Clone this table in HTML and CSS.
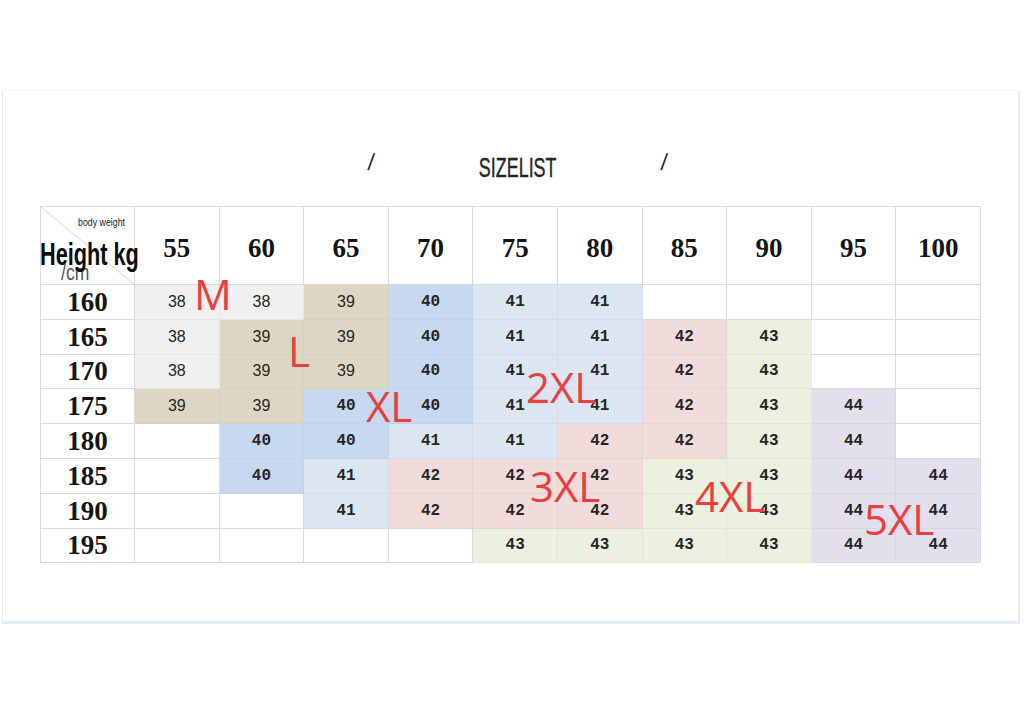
FILE: index.html
```html
<!DOCTYPE html>
<html lang="en">
<head>
<meta charset="utf-8">
<title>Size list</title>
<link rel="stylesheet" href="styles.css">
</head>
<body>
<div class="panel">
  <div class="title-row">
    <span class="slash">/</span>
    <span class="title-box"><span class="title">SIZELIST</span></span>
    <span class="slash">/</span>
  </div>
  <div class="chart">
    <table class="sizes">
      <colgroup><col class="col-head"><col span="10"></colgroup>
      <thead>
        <tr>
          <th class="corner">
            <svg class="diag" width="94" height="78" viewBox="0 0 94 78"><line x1="0" y1="0" x2="94" y2="78" stroke="#d2d2d2" stroke-width="1"/></svg>
            <span class="cm">/cm</span>
            <span class="bw">body weight</span>
            <span class="hk">Height kg</span>
          </th>
          <th>55</th><th>60</th><th>65</th><th>70</th><th>75</th><th>80</th><th>85</th><th>90</th><th>95</th><th>100</th>
        </tr>
      </thead>
      <tbody>
        <tr><th>160</th>
          <td class="m s">38</td><td class="m s">38</td><td class="l s">39</td><td class="xl">40</td><td class="x2">41</td><td class="x2">41</td><td></td><td></td><td></td><td></td></tr>
        <tr><th>165</th>
          <td class="m s">38</td><td class="l s">39</td><td class="l s">39</td><td class="xl">40</td><td class="x2">41</td><td class="x2">41</td><td class="x3">42</td><td class="x4">43</td><td></td><td></td></tr>
        <tr><th>170</th>
          <td class="m s">38</td><td class="l s">39</td><td class="l s">39</td><td class="xl">40</td><td class="x2">41</td><td class="x2">41</td><td class="x3">42</td><td class="x4">43</td><td></td><td></td></tr>
        <tr><th>175</th>
          <td class="l s">39</td><td class="l s">39</td><td class="xl">40</td><td class="xl">40</td><td class="x2">41</td><td class="x2">41</td><td class="x3">42</td><td class="x4">43</td><td class="x5">44</td><td></td></tr>
        <tr><th>180</th>
          <td></td><td class="xl">40</td><td class="xl">40</td><td class="x2">41</td><td class="x2">41</td><td class="x3">42</td><td class="x3">42</td><td class="x4">43</td><td class="x5">44</td><td></td></tr>
        <tr><th>185</th>
          <td></td><td class="xl">40</td><td class="x2">41</td><td class="x3">42</td><td class="x3">42</td><td class="x3">42</td><td class="x4">43</td><td class="x4">43</td><td class="x5">44</td><td class="x5">44</td></tr>
        <tr><th>190</th>
          <td></td><td></td><td class="x2">41</td><td class="x3">42</td><td class="x3">42</td><td class="x3">42</td><td class="x4">43</td><td class="x4">43</td><td class="x5">44</td><td class="x5">44</td></tr>
        <tr><th>195</th>
          <td></td><td></td><td></td><td></td><td class="x4">43</td><td class="x4">43</td><td class="x4">43</td><td class="x4">43</td><td class="x5">44</td><td class="x5">44</td></tr>
      </tbody>
    </table>
    <span class="tag tag-m">M</span>
    <span class="tag tag-l">L</span>
    <span class="tag tag-xl">XL</span>
    <span class="tag tag-2xl">2XL</span>
    <span class="tag tag-3xl">3XL</span>
    <span class="tag tag-4xl">4XL</span>
    <span class="tag tag-5xl">5XL</span>
  </div>
</div>
</body>
</html>
```

FILE: styles.css
```css
html, body {
  margin: 0;
  padding: 0;
  background: #ffffff;
}

body {
  width: 1024px;
  height: 716px;
  overflow: hidden;
  font-family: "Liberation Sans", Arial, sans-serif;
}

.panel {
  box-sizing: border-box;
  margin: 90px 0 0 2px;
  width: 1018px;
  height: 534px;
  border-left: 1px solid #e8e8e8;
  border-right: 2px solid #e9eef5;
  border-bottom: 3px solid #e7edf5;
  border-top: 1px solid #f6f6f6;
  padding-top: 61px;
  display: flex;
  flex-direction: column;
}

.title-row {
  display: flex;
  justify-content: center;
  align-items: flex-start;
  gap: 104px;
  padding-left: 14px;
  height: 32px;
}

.slash {
  font-family: "Liberation Sans", Arial, sans-serif;
  font-size: 22px;
  line-height: 22px;
  color: #1e1e1e;
  font-weight: normal;
  margin-top: 0;
  display: inline-block;
  transform: skewX(-6deg) scaleY(1.05);
}

.title-box {
  width: 78px;
  display: flex;
  justify-content: center;
  overflow: visible;
}

.title {
  display: inline-block;
  font-size: 28px;
  line-height: 32px;
  color: #262626;
  white-space: nowrap;
  transform: scaleX(0.64);
  transform-origin: center;
  -webkit-text-stroke: 0.4px #262626;
}

.chart {
  position: relative;
  margin: 22px 0 0 37px;
  width: 941px;
}

.sizes {
  border-collapse: collapse;
  table-layout: fixed;
  width: 941px;
  border: 1px solid #c9c9c9;
}

.col-head {
  width: 94px;
}

.sizes th,
.sizes td {
  border: 1px solid #dadada;
  padding: 0;
  text-align: center;
  vertical-align: middle;
}

.sizes thead th {
  height: 73px;
  padding-top: 4px;
  font-family: "Liberation Serif", "Times New Roman", serif;
  font-weight: bold;
  font-size: 27px;
  line-height: 30px;
  color: #151515;
  background: #fff;
}

.sizes tbody th {
  height: 33.8px;
  font-family: "Liberation Serif", "Times New Roman", serif;
  font-weight: bold;
  font-size: 27px;
  line-height: 28px;
  color: #151515;
  background: #fff;
}

.sizes td {
  height: 33.8px;
  font-family: "Liberation Mono", "Courier New", monospace;
  font-weight: bold;
  font-size: 16px;
  line-height: 18px;
  color: #262626;
  background: #fff;
}

.sizes td.s {
  font-family: "Liberation Sans", Arial, sans-serif;
  font-weight: normal;
  font-size: 16px;
}

.sizes td.m { background: #f0f0f0; border-color: #e6e6e6; }
.sizes td.l { background: #dcd7c3; border-color: #d6d1bd; }
.sizes td.xl { background: #c6d9f0; border-color: #c0d3ea; }
.sizes td.x2 { background: #dce6f1; border-color: #d4deea; }
.sizes td.x3 { background: #f2dcdb; border-color: #ead4d3; }
.sizes td.x4 { background: #ebf1de; border-color: #e1e8d4; }
.sizes td.x5 { background: #e4dfec; border-color: #dbd6e3; }

.sizes th.corner {
  position: relative;
  overflow: visible;
}

.diag {
  position: absolute;
  left: 0;
  top: 0;
}

.cm {
  position: absolute;
  left: 20px;
  top: 54px;
  font-family: "Liberation Sans", Arial, sans-serif;
  font-weight: normal;
  font-size: 22px;
  line-height: 24px;
  color: #555;
  transform: scaleX(0.8);
  transform-origin: left;
}

.bw {
  position: absolute;
  left: 37px;
  top: 8px;
  font-family: "Liberation Sans", Arial, sans-serif;
  font-weight: normal;
  font-size: 11px;
  line-height: 14px;
  color: #222;
  white-space: nowrap;
  transform: scaleX(0.8);
  transform-origin: left;
}

.hk {
  position: absolute;
  left: -1px;
  top: 32px;
  font-family: "Liberation Sans", Arial, sans-serif;
  font-weight: bold;
  font-size: 31px;
  line-height: 31px;
  color: #0c0c0c;
  white-space: nowrap;
  transform: scaleX(0.7);
  transform-origin: left;
}

.tag {
  position: absolute;
  font-family: "Open Sans", "Noto Sans", sans-serif;
  font-size: 42px;
  line-height: 42px;
  color: #e8403f;
  white-space: nowrap;
}

.tag-m { left: 154px; top: 67px; }
.tag-l { left: 248px; top: 124px; }
.tag-xl { left: 326px; top: 179px; }
.tag-2xl { left: 486px; top: 160px; }
.tag-3xl { left: 490px; top: 259px; }
.tag-4xl { left: 655px; top: 269px; }
.tag-5xl { left: 824px; top: 292px; }
```
